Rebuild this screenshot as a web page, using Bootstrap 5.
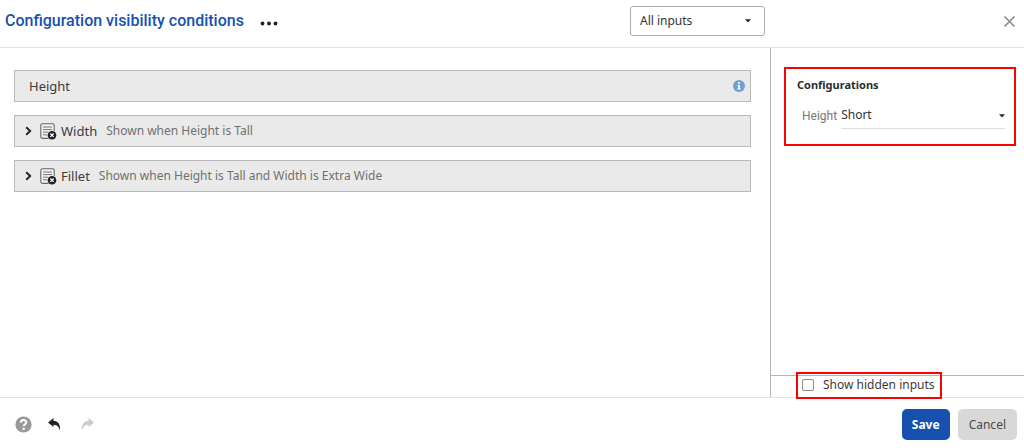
<!DOCTYPE html>
<html lang="en">
<head>
<meta charset="utf-8">
<meta name="viewport" content="width=device-width, initial-scale=1">
<title>Configuration visibility conditions</title>
<link href="https://cdn.jsdelivr.net/npm/bootstrap@5.3.0/dist/css/bootstrap.min.css" rel="stylesheet">
<style>
  body { font-family: "Noto Sans", "Liberation Sans", sans-serif; font-size: 12px; line-height: 20px; color: #3c3c3c; }
  .dialog-head { border-bottom: 1px solid #e2e2e2; padding: 6px 0 11px; }
  .dialog-title { font-family: Roboto, sans-serif; font-size: 16px; line-height: 24px; font-weight: 500; color: #1651b0; padding-left: 5px; }
  .side { width: 254px; }
  .side-pane { border-left: 1px solid #b5b5b5; }
  .plain-btn { border: 0; padding: 0; background: none; line-height: 0; }
  .caret { position: absolute; top: 50%; margin-top: -2px; pointer-events: none; }
  .filter { width: 135px; margin-right: 5px; }
  .filter .form-select { height: 30px; padding: 0 24px 0 9px; border: 1px solid #adadad; border-radius: 3px; }
  .form-select { font-size: 12px; line-height: 20px; color: #333; background-image: none; }
  .filter .caret { right: 14px; }
  .inputs { padding: 22px 19px 22px 14px; gap: 13px; }
  .input-row { height: 32px; background: #eaeaea; border: 1px solid #b9b9b9; padding: 0 5px 0 10px; }
  .input-name { font-size: 13px; }
  .cond { color: #707070; margin-left: 9px; }
  .callout { border: 2px solid #f00; }
  .config-box { margin: 19px 8px 0 13px; padding: 6px 9px 15px 11px; }
  .config-box h2 { font-size: 11px; line-height: 20px; margin-bottom: 7px; font-weight: 700; color: #2c2c2c; }
  .config-box label { font-family: Roboto, sans-serif; font-size: 12px; color: #777; margin-left: 5px; }
  .config-box .form-select { height: 27px; padding: 0 16px 0 0; border: 0; border-bottom: 1px solid #ddd; border-radius: 0; }
  .config-box .caret { right: 0; }
  .hidden-bar { border-top: 1px solid #b5b5b5; height: 22px; }
  .hidden-box { position: relative; z-index: 1; height: 27px; margin: -4px 0 0 25px; padding: 0 5px 2px 4px; gap: 9px; }
  .hidden-box .form-check-input { width: 12px; height: 12px; border: 1px solid #8c8c8c; border-radius: 2px; }
  .dialog-foot { border-top: 1px solid #e4e4e8; padding: 11px 7px 8px 15px; }
  .dialog-foot .btn { height: 31px; padding: 0 10px; font-size: 12px; line-height: 20px; border: 0; border-radius: 5px; }
  .btn-save { background: #1651b0; color: #fff; font-weight: 700; }
  .dialog-foot .btn-cancel { background: #d8d8d8; color: #4a4a4a; padding: 0 11px; }
</style>
</head>
<body class="d-flex flex-column min-vh-100 bg-white">
<svg width="0" height="0" class="position-absolute" aria-hidden="true">
  <symbol id="caret" viewBox="0 0 6 4"><path d="M0 .3h6L3 3.6z" fill="#222"/></symbol>
  <symbol id="chev" viewBox="0 0 7 10"><path d="M1.2 1.2 5.2 5 1.2 8.8" fill="none" stroke="#222" stroke-width="1.9"/></symbol>
  <symbol id="doc" viewBox="0 0 17 17">
    <rect x=".8" y=".8" width="13.4" height="14.6" rx="1.6" fill="#f1f1f1" stroke="#666" stroke-width="1.1"/>
    <path d="M3 4h9M3 6.6h9M3 9.2h5M3 11.8h4" stroke="#777" stroke-width="1"/>
    <circle cx="12" cy="12.2" r="4.8" fill="#eaeaea"/><circle cx="12" cy="12.2" r="4.3" fill="#222"/>
    <path d="m10.3 10.5 3.4 3.4m0-3.4-3.4 3.4" stroke="#fff" stroke-width="1.2"/>
  </symbol>
</svg>

<header class="dialog-head d-flex align-items-center">
  <div class="d-flex flex-grow-1 align-items-center">
    <h1 class="dialog-title mb-0">Configuration visibility conditions</h1>
    <button type="button" class="plain-btn ms-3 pt-1" aria-label="More options">
      <svg width="18" height="5" viewBox="0 0 18 5" fill="#222"><circle cx="2.5" cy="2.5" r="1.9"/><circle cx="9" cy="2.5" r="1.9"/><circle cx="15.5" cy="2.5" r="1.9"/></svg>
    </button>
    <div class="filter position-relative ms-auto">
      <select class="form-select" aria-label="Filter inputs"><option>All inputs</option></select>
      <svg class="caret" width="6" height="4"><use href="#caret"/></svg>
    </div>
  </div>
  <div class="side d-flex justify-content-end pe-2">
    <button type="button" class="plain-btn" aria-label="Close">
      <svg width="13" height="13" viewBox="0 0 13 13"><path d="m1.5 1.5 10 10m0-10-10 10" stroke="#8c8c8c" stroke-width="1.7"/></svg>
    </button>
  </div>
</header>

<main class="d-flex flex-grow-1">
  <section class="inputs flex-grow-1 d-flex flex-column">
    <div class="input-row d-flex align-items-center">
      <span class="input-name ms-1">Height</span>
      <svg class="ms-auto" width="12" height="12" viewBox="0 0 12 12"><circle cx="6" cy="6" r="6" fill="#729fd2"/><path d="M5 2.2h2v1.6H5zM4.5 4.9H7v3.6h.8v1H4.3v-1h.9V5.9h-.7z" fill="#fff"/></svg>
    </div>
    <div class="input-row d-flex align-items-center">
      <button type="button" class="plain-btn" aria-label="Expand Width"><svg width="7" height="10"><use href="#chev"/></svg></button>
      <svg class="ms-2" width="17" height="17"><use href="#doc"/></svg>
      <span class="input-name ms-1">Width</span><span class="cond">Shown when Height is Tall</span>
    </div>
    <div class="input-row d-flex align-items-center">
      <button type="button" class="plain-btn" aria-label="Expand Fillet"><svg width="7" height="10"><use href="#chev"/></svg></button>
      <svg class="ms-2" width="17" height="17"><use href="#doc"/></svg>
      <span class="input-name ms-1">Fillet</span><span class="cond">Shown when Height is Tall and Width is Extra Wide</span>
    </div>
  </section>

  <aside class="side side-pane d-flex flex-column">
    <section class="callout config-box">
      <h2>Configurations</h2>
      <div class="d-flex align-items-center">
        <label for="height">Height</label>
        <div class="position-relative flex-grow-1 ms-1">
          <select id="height" class="form-select"><option>Short</option></select>
          <svg class="caret" width="6" height="4"><use href="#caret"/></svg>
        </div>
      </div>
    </section>
    <div class="hidden-bar d-flex mt-auto">
      <div class="callout hidden-box d-flex align-items-center">
        <input class="form-check-input m-0" type="checkbox" id="showHidden">
        <label for="showHidden">Show hidden inputs</label>
      </div>
    </div>
  </aside>
</main>

<footer class="dialog-foot d-flex align-items-center gap-2">
  <button type="button" class="plain-btn" aria-label="Help">
    <svg width="17" height="17" viewBox="0 0 17 17"><circle cx="8.5" cy="8.5" r="8.1" fill="#999"/><path d="M5.7 6.6c.2-3.5 5.8-3.3 5.6-.1-.1 1.9-2.6 1.8-2.6 3.6" fill="none" stroke="#fff" stroke-width="2"/><circle cx="8.6" cy="12.7" r="1.3" fill="#fff"/></svg>
  </button>
  <button type="button" class="plain-btn ms-2" aria-label="Undo">
    <svg width="13" height="13" viewBox="0 0 13 13"><path d="M0 4.5 5.5 0v2.7C10 3 12.5 6 12 12.5 10.8 8.5 9 6.9 5.5 6.7V9z" fill="#222"/></svg>
  </button>
  <button type="button" class="plain-btn ms-2 ps-1" aria-label="Redo" disabled>
    <svg width="13" height="13" viewBox="0 0 13 13"><path d="M13 4.5 7.5 0v2.7C3 3 .5 6 1 12.5 2.2 8.5 4 6.9 7.5 6.7V9z" fill="#ccc"/></svg>
  </button>
  <button type="button" class="btn btn-save ms-auto">Save</button>
  <button type="button" class="btn btn-cancel">Cancel</button>
</footer>
<script src="https://cdn.jsdelivr.net/npm/bootstrap@5.3.0/dist/js/bootstrap.bundle.min.js"></script>
</body>
</html>
